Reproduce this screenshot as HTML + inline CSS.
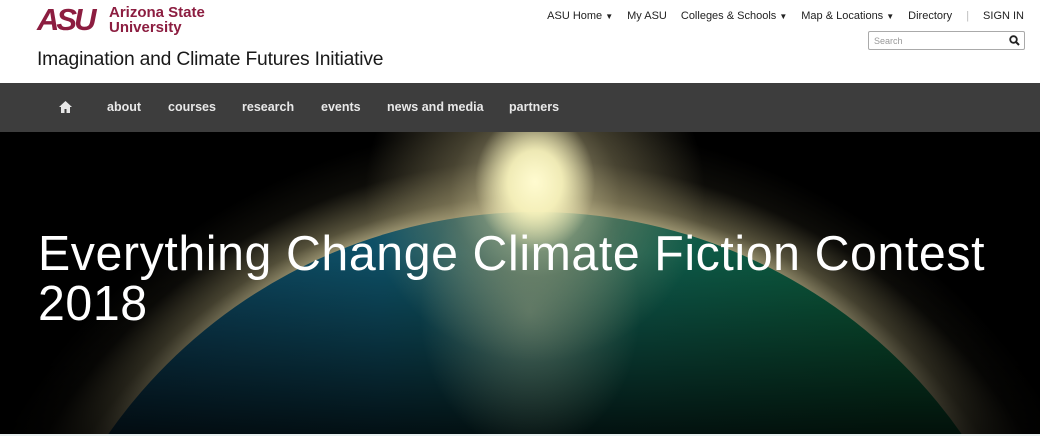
<!DOCTYPE html>
<html><head><style>
*{margin:0;padding:0;box-sizing:border-box}
body{width:1040px;height:436px;overflow:hidden;background:#fff;font-family:"Liberation Sans",Arial,sans-serif;position:relative}
.asu{position:absolute;left:37px;top:3px;font:900 31px/34px "Liberation Sans";color:#8c1d40;letter-spacing:-3px;font-style:italic}
.uni{position:absolute;left:109px;top:5px;color:#8c1d40;font:bold 15px/15px "Liberation Sans"}
.title{position:absolute;left:37px;top:49px;font-size:19.3px;color:#191919;letter-spacing:-0.2px}
.top{position:absolute;right:16px;top:10px;font-size:11px;color:#222;display:flex;gap:14px;white-space:nowrap}
.top .c{font-size:8px}
.search{position:absolute;left:868px;top:31px;width:157px;height:19px;border:1px solid #aaa;border-radius:2px;font-size:9px;color:#999;padding:4px 5px}
.nav{position:absolute;left:0;top:83px;width:1040px;height:49px;background:#3d3d3d;color:#e8e8e8;font-weight:bold;font-size:12.5px}
.nav span{position:absolute;top:17px}
.hero{position:absolute;left:0;top:132px;width:1040px;height:302px;overflow:hidden;background:#000}
.halo{position:absolute;left:-75px;top:-9px;width:1220px;height:1220px;border-radius:50%;
background:radial-gradient(circle closest-side,rgba(230,220,170,.8) 84%,rgba(190,180,130,.45) 88%,rgba(90,85,60,.15) 94%,rgba(0,0,0,0) 100%)}
.planet{position:absolute;left:14px;top:80px;width:1042px;height:1042px;border-radius:50%;
background:linear-gradient(90deg,#0b3550 0%,#0e5066 35%,#0e5a4c 60%,#0a5533 85%)}
.shade{position:absolute;left:0;top:0;width:1040px;height:302px;
background:linear-gradient(180deg,rgba(0,0,0,0) 40%,rgba(0,0,0,.8) 100%)}
.glow{position:absolute;left:0;top:0;width:1040px;height:302px;
background:radial-gradient(ellipse 60px 70px at 535px 50px,#fffbd0 0%,rgba(250,245,190,.9) 45%,rgba(200,190,130,0) 100%),
radial-gradient(ellipse 170px 170px at 535px 60px,rgba(230,220,170,.75) 0%,rgba(160,150,110,.4) 50%,rgba(0,0,0,0) 100%),
radial-gradient(ellipse 110px 140px at 530px 180px,rgba(200,200,160,.35) 0%,rgba(0,0,0,0) 100%)}
.line{position:absolute;left:0;top:434px;width:1040px;height:2px;background:#e8f0f0}
.h1{position:absolute;left:38px;top:97px;color:#fff;font-size:49px;line-height:50px;font-weight:normal;letter-spacing:0.6px;transform:scaleX(0.985);transform-origin:left;white-space:nowrap}
</style></head><body>
<div class="asu">ASU</div>
<div class="uni">Arizona State<br>University</div>
<div class="title">Imagination and Climate Futures Initiative</div>
<div class="top"><span>ASU Home <span class="c">▼</span></span><span>My ASU</span><span>Colleges &amp; Schools <span class="c">▼</span></span><span>Map &amp; Locations <span class="c">▼</span></span><span>Directory</span><span style="color:#bbb">|</span><span>SIGN IN</span></div>
<div class="search">Search<svg style="position:absolute;right:4px;top:3px" width="11" height="11" viewBox="0 0 11 11"><circle cx="4.5" cy="4.5" r="3.3" fill="none" stroke="#222" stroke-width="1.8"/><path d="M7 7l3 3" stroke="#222" stroke-width="2"/></svg></div>
<div class="nav">
<svg style="position:absolute;left:59px;top:18px" width="13" height="12" viewBox="0 0 13 12"><path d="M6.5 0L0 6h2v6h3.5V8h2v4H11V6h2z" fill="#e8e8e8"/></svg>
<span style="left:107px">about</span><span style="left:168px">courses</span><span style="left:242px">research</span><span style="left:321px">events</span><span style="left:387px">news and media</span><span style="left:509px">partners</span>
</div>
<div class="hero"><div class="halo"></div><div class="planet"></div><div class="shade"></div><div class="glow"></div>
<div class="h1">Everything Change Climate Fiction Contest<br>2018</div></div>
<div class="line"></div>
</body></html>
